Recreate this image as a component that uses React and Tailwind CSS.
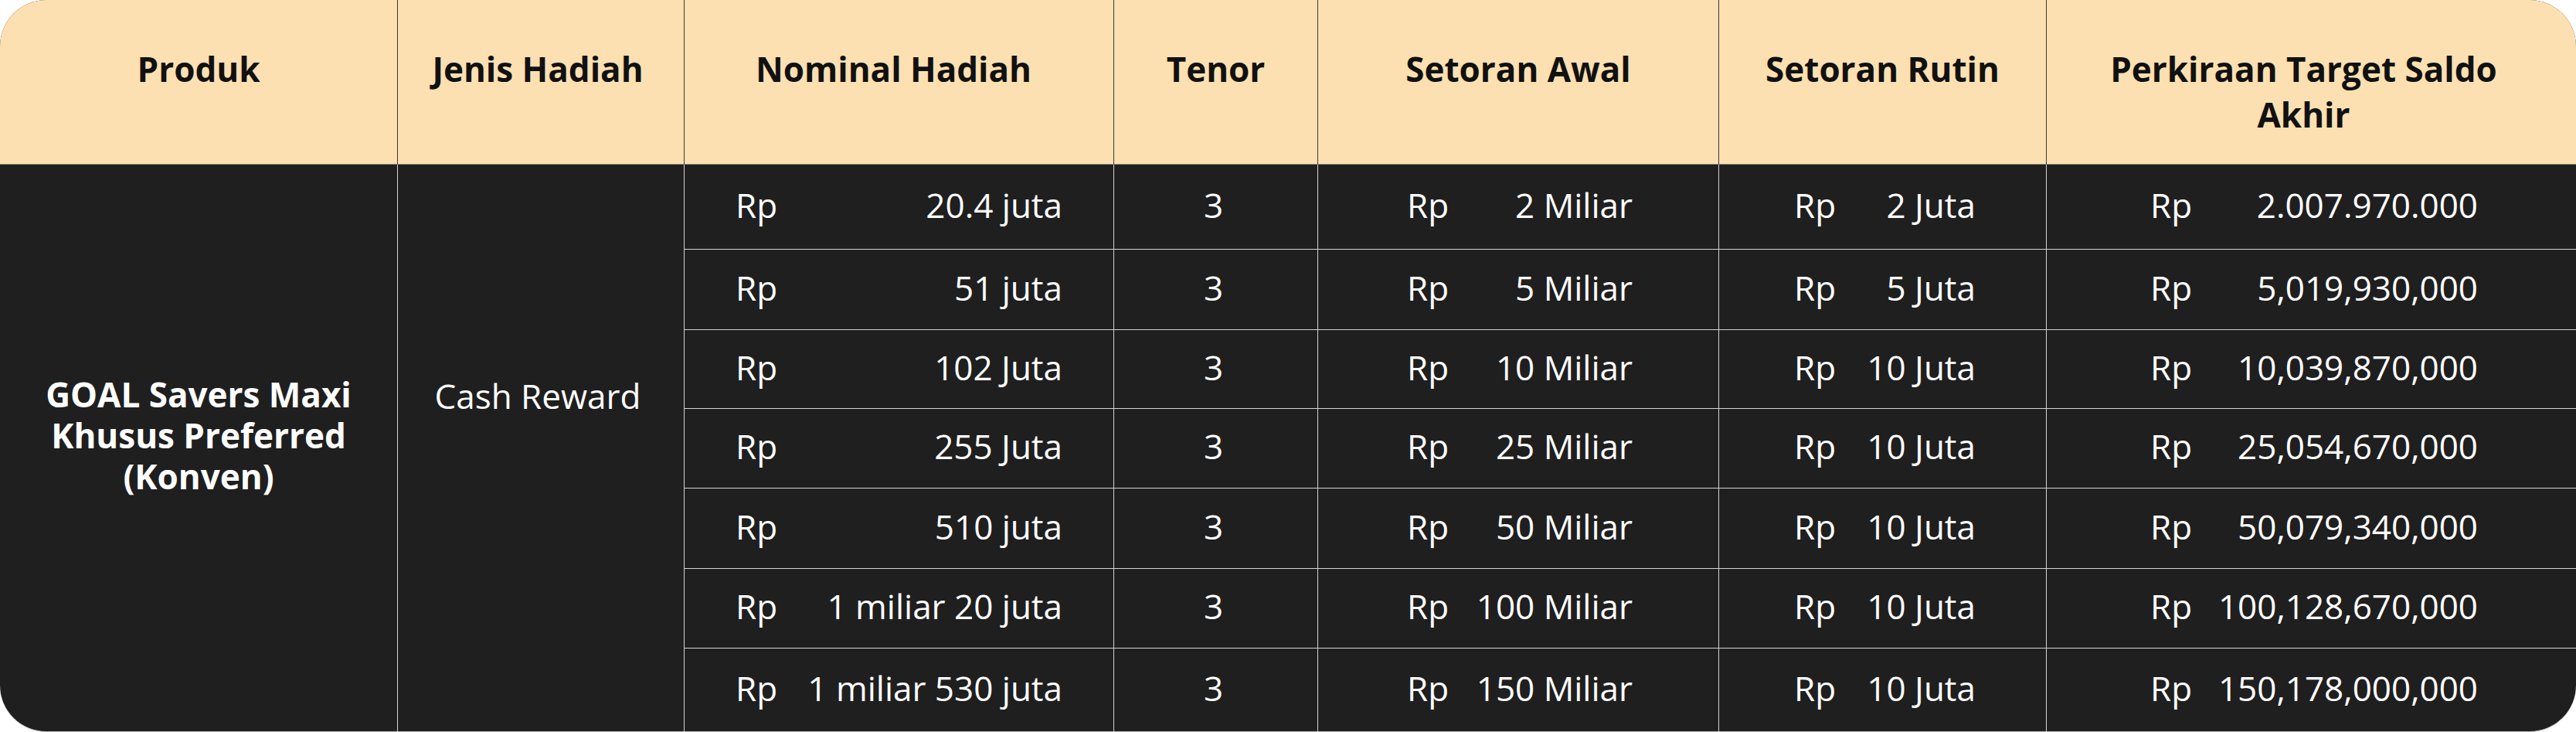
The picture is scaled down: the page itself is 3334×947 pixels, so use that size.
import React from "react";

const rows = [
  { nom: "20.4 juta", awal: "2 Miliar", rutin: "2 Juta", target: "2.007.970.000" },
  { nom: "51 juta", awal: "5 Miliar", rutin: "5 Juta", target: "5,019,930,000" },
  { nom: "102 Juta", awal: "10 Miliar", rutin: "10 Juta", target: "10,039,870,000" },
  { nom: "255 Juta", awal: "25 Miliar", rutin: "10 Juta", target: "25,054,670,000" },
  { nom: "510 juta", awal: "50 Miliar", rutin: "10 Juta", target: "50,079,340,000" },
  { nom: "1 miliar 20 juta", awal: "100 Miliar", rutin: "10 Juta", target: "100,128,670,000" },
  { nom: "1 miliar 530 juta", awal: "150 Miliar", rutin: "10 Juta", target: "150,178,000,000" },
];

function Head({ children, first, pad = "px-[6px]" }) {
  return (
    <div
      className={
        "bg-[#fce0b1] border-b border-[#8f8572] text-center font-bold text-[44px] leading-[59px] text-[#111111] pt-[60px] " +
        pad +
        (first ? "" : " border-l border-l-[#3a3a3a]")
      }
    >
      {children}
    </div>
  );
}

function Money({ value, pad, top }) {
  return (
    <div
      className={
        "flex items-center justify-between pb-[6px] border-l border-[#d4d4d4] " +
        (top ? "" : "border-t ") +
        pad
      }
    >
      <span>Rp</span>
      <span>{value}</span>
    </div>
  );
}

export default function App() {
  return (
    <div className="w-[3334px] h-[947px] bg-white font-['Open_Sans',sans-serif]">
      <div className="w-full h-full rounded-[60px] overflow-hidden bg-[#1f1f1f] text-white text-[44px] grid grid-cols-[514px_371px_556px_264px_519px_424px_686px] grid-rows-[213px_109px_104px_102px_103px_104px_103px_1fr] border-b border-[#bdbdbd]">
        <Head first>Produk</Head>
        <Head pad="pl-0 pr-[8px]">Jenis Hadiah</Head>
        <Head pad="pl-0 pr-[14px]">Nominal Hadiah</Head>
        <Head>Tenor</Head>
        <Head>Setoran Awal</Head>
        <Head>Setoran Rutin</Head>
        <Head pad="pl-0 pr-[20px]">
          Perkiraan Target Saldo
          <br />
          Akhir
        </Head>

        <div className="row-span-7 font-bold text-center leading-[53px] pt-[271px]">
          GOAL Savers Maxi
          <br />
          Khusus Preferred
          <br />
          (Konven)
        </div>
        <div className="row-span-7 text-center leading-[53px] pt-[273px] pr-[8px] border-l border-[#d4d4d4]">
          Cash Reward
        </div>

        {rows.map((r, i) => (
          <React.Fragment key={i}>
            <Money value={r.nom} top={i === 0} pad="pl-[66px] pr-[66px]" />
            <div
              className={
                "flex items-center justify-center pb-[6px] pr-[6px] border-l border-[#d4d4d4] " +
                (i === 0 ? "" : "border-t")
              }
            >
              3
            </div>
            <Money value={r.awal} top={i === 0} pad="pl-[115px] pr-[111px]" />
            <Money value={r.rutin} top={i === 0} pad="pl-[97px] pr-[91px]" />
            <Money value={r.target} top={i === 0} pad="pl-[134px] pr-[127px]" />
          </React.Fragment>
        ))}
      </div>
    </div>
  );
}
